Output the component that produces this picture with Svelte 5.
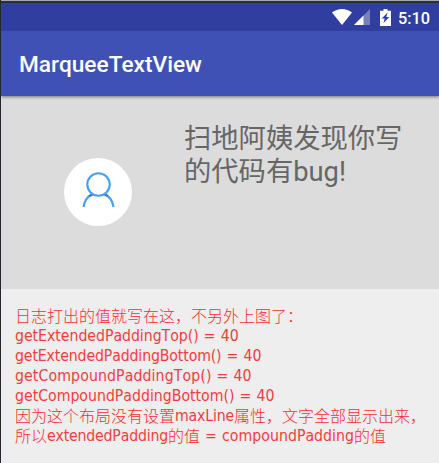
<script>
  const getter = (name, width) => [{ t: name, w: width }, { t: ' = ', w: 22 }, { t: '40', w: 18 }];
  const lines = [
    [{ t: '日志打出的值就写在这，不另外上图了：' }],
    getter('getExtendedPaddingTop()', 183.7),
    getter('getExtendedPaddingBottom()', 206.5),
    getter('getCompoundPaddingTop()', 196.5),
    getter('getCompoundPaddingBottom()', 219.5),
    [{ t: '因为这个布局没有设置' }, { t: 'maxLine', w: 59 }, { t: '属性，文字全部显示出来，' }],
    [{ t: '所以' }, { t: 'extendedPadding', w: 121 }, { t: '的值' }, { t: ' = ', w: 22 }, { t: 'compoundPadding', w: 132 }, { t: '的值' }]
  ];

  // Spreads the letters of a run evenly over its advance width.
  function fit(node, width) {
    if (!width) return;
    const natural = node.getBoundingClientRect().width;
    node.style.letterSpacing = (width - natural) / node.textContent.length + 'px';
  }
</script>

<div class="screen">
  <header>
    <div class="status">
      <svg class="wifi" width="20" height="16" viewBox="0 0 20 16"><path d="M0 3.6C5.8-1.2 14.2-1.2 20 3.6L10 16Z" fill="#fff" /></svg>
      <svg class="signal" width="16" height="16" viewBox="0 0 16 16"><path d="M0 16L16 0V16Z" fill="#7780bf" /><path d="M0 16L9.5 6.5V16Z" fill="#fff" /></svg>
      <svg class="battery" width="11" height="17" viewBox="0 0 11 17"><path d="M3.5 0H7.5V1.7H11V17H0V1.7H3.5Z" fill="#fff" /><path d="M7.6 3.6L1.8 9.5H4.7L3.4 14.2L9.2 8H6.3Z" fill="#303f9f" /></svg>
      <span>5:10</span>
    </div>
    <div class="bar"><h1>MarqueeTextView</h1></div>
  </header>
  <section class="item">
    <div class="avatar">
      <svg width="68" height="68" viewBox="0 0 68 68" fill="none" stroke="#459ff8" stroke-width="2.1">
        <path d="M19.5 49C20.3 43 23.5 38.5 28.5 36.2M40.5 36.2C45.5 38.5 48.7 43 49.5 49" />
        <path d="M25.2 38.3Q26.8 36.9 28.5 36.2M40.5 36.2Q42.2 36.9 43.8 38.3" stroke="#3478bd" />
        <circle cx="34.5" cy="26.5" r="11.2" />
      </svg>
    </div>
    <p>扫地阿姨发现你写<br />的代码有<span>bug!</span></p>
  </section>
  <section class="log">
    {#each lines as line}
      <div class="line">{#each line as part}<span class:latin={part.w} use:fit={part.w}>{part.t}</span>{/each}</div>
    {/each}
  </section>
</div>

<style>
  .screen { box-sizing: border-box; width: 439px; height: 463px; overflow: hidden; background: #eee; border-left: 1px solid #242633; display: flex; flex-direction: column; }
  header { flex: none; height: 96px; box-sizing: border-box; border-top: 1px solid #a5a9b2; background: #3f51b5; color: #fff; font-family: Roboto, sans-serif; box-shadow: 0 1px 3px #0007; z-index: 1; }
  .status { box-sizing: border-box; height: 30px; border-top: 2px solid #292d42; background: #303f9f; display: flex; align-items: center; padding-left: 331px; font-size: 16.3px; font-weight: 500; }
  .status svg { flex: none; }
  .signal { margin-left: 2px; }
  .battery { margin-left: 10px; }
  .status span { margin: 2px 0 0 7px; }
  .bar { height: 65px; display: flex; align-items: center; padding-left: 18px; }
  h1 { margin: 2px 0 0; font-size: 22.7px; line-height: 30px; font-weight: 500; }
  .item { flex: none; height: 193px; background: #dcdcdc; display: flex; }
  .avatar { flex: none; width: 68px; height: 68px; margin: 62px 0 0 63px; border-radius: 50%; background: #fff; }
  .avatar svg { display: block; }
  p { margin: 24px 0 0 52px; color: #666; font: 27.3px/33px "Noto Sans CJK SC", sans-serif; white-space: nowrap; }
  p span { font-family: Roboto, sans-serif; }
  .log { padding: 16px 0 0 14px; color: #ff2b2b; }
  .line { height: 20px; line-height: 20px; white-space: pre; font-size: 16px; font-family: "Noto Sans CJK SC", sans-serif; font-weight: 300; display: flex; }
  .line span { flex: none; }
  .latin { padding-top: 1px; font-family: "DejaVu Sans Condensed", "DejaVu Sans", sans-serif; font-stretch: condensed; font-weight: 400; font-size: 15.7px; font-kerning: none; color: #f63c3c; }
</style>
